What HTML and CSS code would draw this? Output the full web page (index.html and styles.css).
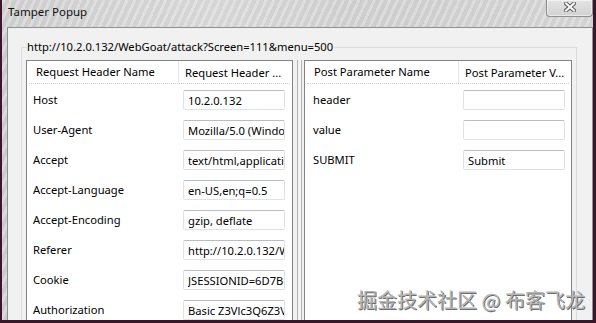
FILE: index.html
```html
<!DOCTYPE html>
<html>
<head>
<meta charset="utf-8">
<title>Tamper Popup</title>
<link rel="stylesheet" href="styles.css">
</head>
<body>
<div class="window">
  <div class="titlebar">
    <span class="title">Tamper Popup</span>
    <div class="close">
      <svg width="12" height="10" viewBox="0 0 12 10">
        <path d="M2 1.5 L10 8.5 M10 1.5 L2 8.5" stroke="#5a5a5a" stroke-width="4" stroke-linecap="square" fill="none"/>
        <path d="M2 1.5 L10 8.5 M10 1.5 L2 8.5" stroke="#ffffff" stroke-width="2" stroke-linecap="square" fill="none"/>
      </svg>
    </div>
  </div>
  <div class="client">
    <fieldset class="group">
      <legend class="group-label">http://10.2.0.132/WebGoat/attack?Screen=111&amp;menu=500</legend>
      <div class="panes">
        <div class="pane pane-left">
          <div class="thead">
            <div class="th th-name">Request Header Name</div>
            <div class="th th-value">Request Header ...</div>
          </div>
          <div class="rows">
            <div class="row"><div class="cell-name">Host</div><div class="cell-value"><input class="field" type="text" value="10.2.0.132"></div></div>
            <div class="row"><div class="cell-name">User-Agent</div><div class="cell-value"><input class="field" type="text" value="Mozilla/5.0 (Windows NT 6.1; rv:19.0)"></div></div>
            <div class="row"><div class="cell-name">Accept</div><div class="cell-value"><input class="field" type="text" value="text/html,application/xhtml+xml"></div></div>
            <div class="row"><div class="cell-name">Accept-Language</div><div class="cell-value"><input class="field" type="text" value="en-US,en;q=0.5"></div></div>
            <div class="row"><div class="cell-name">Accept-Encoding</div><div class="cell-value"><input class="field" type="text" value="gzip, deflate"></div></div>
            <div class="row"><div class="cell-name">Referer</div><div class="cell-value"><input class="field" type="text" value="http://10.2.0.132/WebGoat/attack"></div></div>
            <div class="row"><div class="cell-name">Cookie</div><div class="cell-value"><input class="field" type="text" value="JSESSIONID=6D7B1C2A"></div></div>
            <div class="row"><div class="cell-name">Authorization</div><div class="cell-value"><input class="field" type="text" value="Basic Z3Vlc3Q6Z3Vlc3Q="></div></div>
          </div>
        </div>
        <div class="splitter"><div class="grip"></div></div>
        <div class="pane pane-right">
          <div class="thead">
            <div class="th th-name">Post Parameter Name</div>
            <div class="th th-value">Post Parameter V...</div>
          </div>
          <div class="rows">
            <div class="row"><div class="cell-name">header</div><div class="cell-value"><input class="field" type="text" value=""></div></div>
            <div class="row"><div class="cell-name">value</div><div class="cell-value"><input class="field" type="text" value=""></div></div>
            <div class="row"><div class="cell-name">SUBMIT</div><div class="cell-value"><input class="field" type="text" value="Submit"></div></div>
          </div>
        </div>
      </div>
    </fieldset>
  </div>
</div>
<div class="watermark">掘金技术社区 @ 布客飞龙</div>
</body>
</html>
```
FILE: styles.css
```css
* { box-sizing: border-box; }
html, body { margin: 0; padding: 0; }
body {
  width: 596px;
  height: 323px;
  overflow: hidden;
  position: relative;
  background: #3b1628;
  font-family: "Noto Sans", "Open Sans", sans-serif;
  font-size: 11.2px;
  color: #000;
}
.window {
  margin-left: 2px;
  width: 591px;
  height: 320px;
  display: flex;
  flex-direction: column;
  overflow: hidden;
  background:
    repeating-linear-gradient(115deg, rgba(255,255,255,0.18) 0 3px, rgba(0,0,0,0.03) 3px 7px),
    linear-gradient(90deg, #d3d3d3 0%, #dcdcdc 35%, #d4d4d4 60%, #d8d8d8 100%);
}
.titlebar {
  flex: none;
  height: 27px;
  display: flex;
  justify-content: space-between;
  align-items: flex-start;
}
.title {
  padding: 4px 0 0 6px;
  line-height: 16px;
  font-size: 11.5px;
  color: #111;
}
.close {
  width: 47px;
  height: 17px;
  display: flex;
  align-items: center;
  justify-content: center;
  padding-bottom: 2px;
  border: 1px solid #8e8e8e;
  border-top: none;
  border-radius: 0 0 4px 4px;
  background: linear-gradient(#e4e4e4, #d2d2d2);
  box-shadow: inset 0 0 0 1px rgba(255,255,255,0.5);
}
.client {
  flex: 1;
  min-height: 0;
  margin-left: 5px;
  border: 1px solid #8f8f8f;
  border-bottom: none;
  background: #f1f1f1;
  padding: 11px 15px 0 13px;
  display: flex;
  flex-direction: column;
}
.group {
  flex: 1;
  min-height: 0;
  margin: 0;
  min-width: 0;
  padding: 5px 4px 0 4px;
  border: 1px solid #dadee2;
  border-bottom: none;
  display: flex;
  flex-direction: column;
}
.group-label {
  padding: 0 1px;
  line-height: 16px;
}
.panes {
  flex: 1;
  display: flex;
  min-height: 0;
}
.pane {
  background: #fff;
  border: 1px solid #838383;
  border-bottom: none;
}
.pane-left { width: 267px; }
.pane-right { width: 268px; }
.splitter {
  width: 11px;
  flex: none;
  padding-left: 4px;
}
.grip {
  width: 5px;
  height: 100%;
  border-left: 1px solid #b4b4b4;
  border-right: 1px solid #b4b4b4;
  background: #f4f4f4;
}
.thead {
  display: grid;
  height: 23px;
  margin: 0 2px;
  border-bottom: 1px dotted #c8c8c8;
}
.pane-left .thead { grid-template-columns: 149px 1fr; }
.pane-right .thead { grid-template-columns: 151px 1fr; }
.th {
  line-height: 22px;
  white-space: nowrap;
  overflow: hidden;
}
.th-name { padding-left: 7px; }
.th-value {
  padding-left: 6px;
  border-left: 1px solid #e6e6e6;
  margin-top: 1px;
  line-height: 21px;
}
.rows { padding-top: 1px; }
.row {
  display: grid;
  height: 30px;
  align-items: center;
}
.pane-left .row { grid-template-columns: 151px 1fr; }
.pane-right .row { grid-template-columns: 153px 1fr; }
.cell-name { padding-bottom: 1px; }
.pane-left .cell-name { padding-left: 6px; }
.pane-right .cell-name { padding-left: 8px; }
.cell-value { padding-left: 5px; display: flex; }
.field {
  width: 102px;
  height: 20px;
  margin: 0;
  padding: 0 0 0 4px;
  border: 1px solid #dfe2e6;
  border-top-color: #b9bcc1;
  border-radius: 2px;
  background: #fff;
  font-family: inherit;
  font-size: 11.2px;
  color: #000;
  outline: none;
}
.watermark {
  position: absolute;
  right: 11px;
  top: 288px;
  font-family: "Noto Sans CJK SC", sans-serif;
  font-size: 20px;
  line-height: 24px;
  color: #b4b4b4;
  text-shadow: 1px 1px 0 #6e6e6e;
  white-space: nowrap;
}
```
